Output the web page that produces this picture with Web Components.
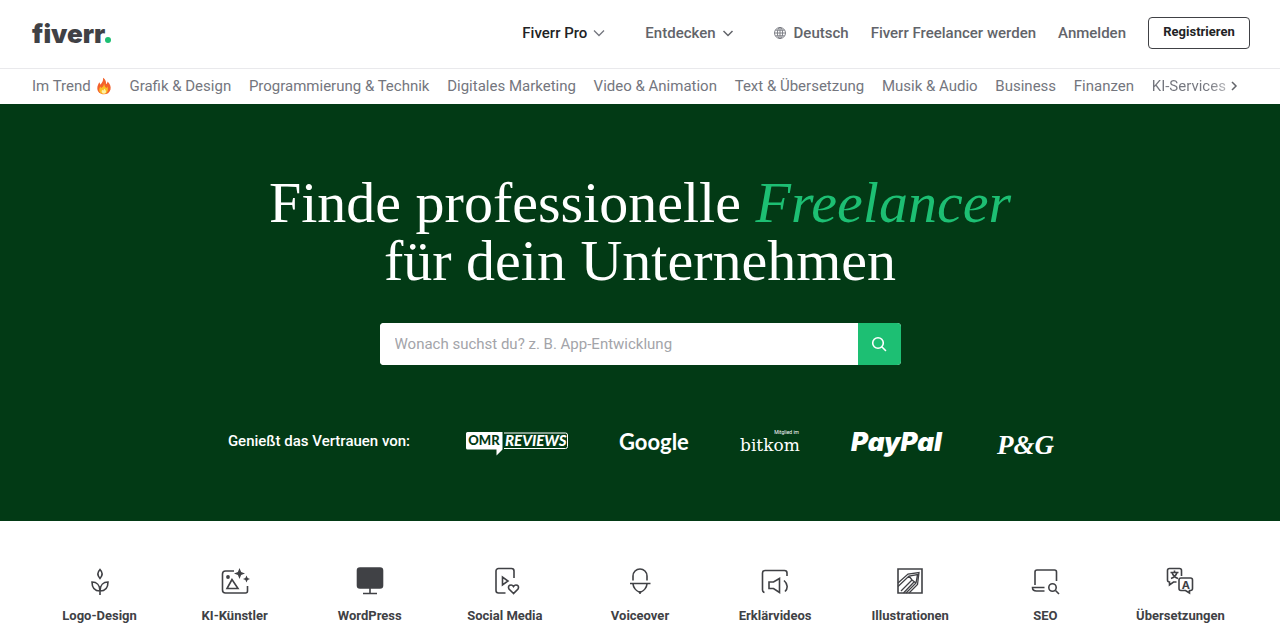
<!DOCTYPE html>
<html lang="de">
<head>
<meta charset="utf-8">
<meta name="viewport" content="width=device-width, initial-scale=1">
<title>Fiverr</title>
<style>
body { margin: 0; background: #fff; font-family: Roboto, "Liberation Sans", sans-serif; font-size: 15px; color: #62646a; }
</style>
</head>
<body>
<site-header></site-header>
<category-nav></category-nav>
<main>
  <hero-banner>
    <search-box></search-box>
    <trusted-by slot="trust"></trusted-by>
  </hero-banner>
  <service-grid>
    <service-tile icon="sprout">Logo-Design</service-tile>
    <service-tile icon="art">KI-Künstler</service-tile>
    <service-tile icon="monitor">WordPress</service-tile>
    <service-tile icon="social">Social Media</service-tile>
    <service-tile icon="voice">Voiceover</service-tile>
    <service-tile icon="video">Erklärvideos</service-tile>
    <service-tile icon="pencil">Illustrationen</service-tile>
    <service-tile icon="seo">SEO</service-tile>
    <service-tile icon="translate">Übersetzungen</service-tile>
  </service-grid>
</main>
<script>
const define = (name, html) => customElements.define(name, class extends HTMLElement {
  constructor() {
    super();
    this.attachShadow({ mode: 'open' }).innerHTML = html;
  }
});

define('site-header', `
<style>
:host { display: block; border-bottom: 1px solid #e9e9ec; }
header { display: flex; align-items: center; justify-content: space-between; padding: 0 30px 0 32px; height: 68px; box-sizing: border-box; }
a { color: inherit; text-decoration: none; }
.logo { display: flex; align-items: baseline; font: 900 26px/32px Inter, sans-serif; color: #404145; }
.logo span { width: 6px; height: 6px; border-radius: 50%; background: #1dbf73; }
nav { display: flex; align-items: center; gap: 22px; font-size: 15px; line-height: 24px; font-weight: 500; padding-bottom: 3px; }
.menu { display: flex; align-items: center; gap: 6px; border: 0; background: none; padding: 0; margin-right: 18px; font: inherit; color: inherit; }
.pro { color: #222325; }
.lang { display: flex; align-items: center; gap: 8px; }
svg { display: block; }
.join { font: 700 13px/16px Roboto, sans-serif; color: #222325; background: #fff; border: 1px solid #404145; border-radius: 4px; height: 32px; width: 102px; padding: 0 0 1px; }
</style>
<header>
  <a class="logo" href="#" aria-label="Fiverr">fiverr<span></span></a>
  <nav>
    <button class="menu pro">Fiverr Pro <svg width="12" height="8" viewBox="0 0 12 8" fill="none" stroke="#74767e" stroke-width="1.3"><path d="M1 1.5l5 5 5-5"/></svg></button>
    <button class="menu">Entdecken <svg width="12" height="8" viewBox="0 0 12 8" fill="none" stroke="#62646a" stroke-width="1.5"><path d="M1.500 2l4.500 4.500 4.500-4.500"/></svg></button>
    <a class="lang" href="#"><svg width="12" height="12" viewBox="0 0 12 12" fill="none" stroke="#74767e" stroke-width=".9"><circle cx="6" cy="6" r="5.5"/><ellipse cx="6" cy="6" rx="2.6" ry="5.5"/><path d="M6 .5v11M.5 6h11M1.4 3.2h9.2M1.4 8.8h9.2"/></svg>Deutsch</a>
    <a href="#">Fiverr Freelancer werden</a>
    <a href="#">Anmelden</a>
    <button class="join">Registrieren</button>
  </nav>
</header>`);

define('category-nav', `
<style>
:host { display: block; }
nav { display: flex; align-items: center; padding: 0 42px 2px 32px; height: 35px; box-sizing: border-box; gap: 4px; }
ul { flex: 1; display: flex; justify-content: space-between; list-style: none; margin: 0; padding: 0; line-height: 24px; font-size: 15px; color: #74767e; white-space: nowrap; }
a { color: inherit; text-decoration: none; }
.hot { display: flex; align-items: center; gap: 5px; }
.fade { background: linear-gradient(90deg, #74767e 75%, #b5b6ba); background-clip: text; -webkit-background-clip: text; color: transparent; }
button { border: 0; background: none; padding: 0; display: flex; }
</style>
<nav aria-label="Kategorien">
  <ul>
    <li><a class="hot" href="#">Im Trend <svg width="16" height="18" viewBox="0 0 16 18" aria-hidden="true"><path d="M7 .8c3 2 3.2 4.5 3 6.2 1-.5 1.5-1.500 1.500-2.600 2.500 2.200 3.700 5 3 8-.8 3.200-3.400 4.900-6.600 4.900-3.700 0-6.600-2.300-6.600-6C1.300 8.800 2.500 7 3.300 5.300c.6.7.9 1.500.8 2.400C6.300 6 7.500 3.500 7 .8z" fill="#f3612b"/><path d="M8 6.500c.8 2 .7 3.600 2.600 4.500.4-.4.700-1 .7-1.700 1.500 3.600.1 7.500-3.500 7.700-3.200 0-5-2.200-4.500-5 .2-1 .7-1.900 1.100-2.400.2.700.500 1.200 1 1.500C6.400 10 8 9.200 8 6.500z" fill="#fbbf24"/><path d="M8 11.500c1.700 1.300 2.300 2.600 1.900 3.900-.9 1.700-3.500 1.500-4.100-.1-.4-1.200.1-2 .700-2.500.2.500.5.700.8.800.5-.4.800-1.200.7-2.100z" fill="#fff1a8"/></svg></a></li>
    <li><a href="#">Grafik &amp; Design</a></li>
    <li><a href="#">Programmierung &amp; Technik</a></li>
    <li><a href="#">Digitales Marketing</a></li>
    <li><a href="#">Video &amp; Animation</a></li>
    <li><a href="#">Text &amp; Übersetzung</a></li>
    <li><a href="#">Musik &amp; Audio</a></li>
    <li><a href="#">Business</a></li>
    <li><a href="#">Finanzen</a></li>
    <li><a class="fade" href="#">KI-Services</a></li>
  </ul>
  <button aria-label="Weiter"><svg width="8" height="10" viewBox="0 0 8 10" fill="none" stroke="#62646a" stroke-width="1.5"><path d="M2 1l4 4-4 4"/></svg></button>
</nav>`);

define('hero-banner', `
<style>
:host { display: block; background: #023a15; color: #fff; padding: 70px 32px 62px; }
h1 { margin: 0 0 33px; text-align: center; font: 400 58px/58px "Liberation Serif", serif; }
em { color: #1dbf73; }
.search { display: flex; justify-content: center; }
.trust { margin-top: 60px; }
</style>
<h1>Finde professionelle <em>Freelancer</em><br>für dein Unternehmen</h1>
<div class="search"><slot></slot></div>
<div class="trust"><slot name="trust"></slot></div>`);

define('search-box', `
<style>
:host { display: block; flex: 0 1 521px; }
form { display: flex; height: 42px; border-radius: 4px; overflow: hidden; background: #fff; }
input { flex: 1; min-width: 0; border: 0; outline: 0; padding: 0 15px; font: 15px/24px Roboto, sans-serif; color: #404145; background: #fff; }
input::placeholder { color: #a3a4a9; opacity: 1; }
button { width: 43px; border: 0; padding: 0; background: #1dbf73; display: flex; align-items: center; justify-content: center; }
</style>
<form role="search">
  <input type="search" aria-label="Suche" placeholder="Wonach suchst du? z. B. App-Entwicklung">
  <button type="button" aria-label="Suchen"><svg width="16" height="16" viewBox="0 0 16 16" fill="none" stroke="#fff" stroke-width="1.6" stroke-linecap="round"><circle cx="7" cy="7" r="5.300"/><path d="M11 11l3.500 3.500"/></svg></button>
</form>`);

define('trusted-by', `
<style>
:host { display: flex; align-items: center; justify-content: center; gap: 52px; height: 34px; }
p { margin: 0 4px 0 0; font-size: 15px; line-height: 24px; font-weight: 500; white-space: nowrap; padding-bottom: 2px; }
svg { display: block; fill: #fff; overflow: visible; }
</style>
<p>Genießt das Vertrauen von:</p>
<svg width="102" height="26" viewBox="0 0 102 26" role="img" aria-label="OMR Reviews">
  <path d="M1.500 3h35v17.500L30.500 26.500V20.500H1.500A1.500 1.500 0 0 1 0 19V4.500A1.500 1.500 0 0 1 1.500 3z"/>
  <path d="M38 4h61.500a2 2 0 0 1 2 2v11.500a2 2 0 0 1-2 2H38" fill="none" stroke="#fff"/>
  <text x="18" y="16" text-anchor="middle" font-family="Lato" font-weight="900" font-size="13" fill="#023a15">OMR</text>
  <text x="39" y="17" font-family="Lato" font-weight="900" font-style="italic" font-size="15">REVIEWS</text>
</svg>
<svg width="68" height="26" viewBox="0 0 68 26" role="img" aria-label="Google"><text x="-1" y="21" font-family="Lato" font-weight="700" font-size="22">Google</text></svg>
<svg width="59" height="26" viewBox="0 0 59 26" role="img" aria-label="bitkom"><text x="59" y="5" text-anchor="end" font-family="Roboto" font-size="5">Mitglied im</text><text x="0" y="22" font-family="DejaVu Serif" font-size="17">bitkom</text></svg>
<svg width="94" height="26" viewBox="0 0 94 26" role="img" aria-label="PayPal"><text x="0" y="22" font-family="Inter" font-weight="900" font-style="italic" font-size="26">PayPal</text></svg>
<svg width="55" height="26" viewBox="0 0 55 26" role="img" aria-label="P&amp;G"><text x="0" y="25" font-family="Liberation Serif" font-weight="700" font-style="italic" font-size="27">P&amp;G</text></svg>`);

define('service-grid', `
<style>
:host { display: grid; grid-template-columns: repeat(9, 1fr); padding: 43px 32px 16px; }
</style>
<slot></slot>`);

const icons = {
  sprout: '<path d="M16 5.500c3 3 3 5.700 0 9-3-3.300-3-6 0-9zM16 31v-7M16 27c-5 0-8-2.500-8-9 4.500 0 8 3 8 9zM16 27c5 0 8-2.500 8-9-4.500 0-8 3-8 9z"/>',
  art: '<path d="M15 7H6.500a3 3 0 0 0-3 3v16a3 3 0 0 0 3 3h20a2 2 0 0 0 2-2v-5M13 15.500l-5 9h11z"/><g fill="#404145" stroke="none"><circle cx="9" cy="13" r="1.900"/><path d="M20.500 4l1.600 3.900 3.900 1.600-3.900 1.600-1.600 3.900-1.600-3.900L15 9.500l3.900-1.600zM27.500 11.500l1.100 2.400 2.400 1.100-2.400 1.100-1.100 2.400-1.100-2.400L24 15l2.400-1.100z"/></g>',
  monitor: '<rect x="3.500" y="4" width="25" height="20" rx="2.500" fill="#404145"/><path d="M16 24v5M9 29.500h14"/>',
  social: '<path d="M25 14V7a2.500 2.500 0 0 0-2.500-2.500h-13A2.500 2.500 0 0 0 7 7v19.500A2.500 2.500 0 0 0 9.500 29h7M13.500 13v8l5.500-4zM24.500 29.500l-4.500-4.500c-2-3.500 2.500-5.500 4.500-2.500 2-3 6.500-1 4.500 2.500z"/>',
  voice: '<path d="M9 16.500V12a7 7 0 0 1 14 0v4.500M6 19.500h20.500M9 20c.5 4.500 3.500 7 7 8.500 3.500-1.500 6.500-4 7-8.500M16 27v3"/>',
  video: '<path d="M5.500 28.500a2.500 2.500 0 0 1-2-2.500V9A2.500 2.500 0 0 1 6 6.500h19.500A2.500 2.500 0 0 1 28 9v3M10 18h4.500l6-3.500v14l-6-4H10zM25 16.500c4 3.500 4 8 1 11"/>',
  pencil: '<path d="M4 5h24v24H4z"/><path d="M4 22.500L15 12l8.500-1.500L22 19 12 29M7 27L18 16M15 12l3 4 4 3M9.500 29L20 18M4 19l10-9 11-1.500-1.500 12L15 29" stroke-width="1.300"/>',
  seo: '<path d="M6 21V8a2 2 0 0 1 2-2h17.500a2 2 0 0 1 2 2v9M15.500 23.500H3.500c0 2.500 1.500 3.500 4 3.500h8"/><circle cx="23.500" cy="23.500" r="3.700"/><path d="M26.500 26.500l3.500 3.500"/>',
  translate: '<path d="M17.500 12V6.500a2 2 0 0 0-2-2H5.500a2 2 0 0 0-2 2V16a2 2 0 0 0 2 2v3l4-3h3M17 14h9.500a2 2 0 0 1 2 2v8.500a2 2 0 0 1-2 2h-1v2.500l-4-2.500H17a2 2 0 0 1-2-2V16a2 2 0 0 1 2-2z"/><path d="M10.500 6.500v2M6.500 8.500h8M13 8.500c-1 3.500-3 5-6 6M8 8.500c1 3.500 3 5 6 6"/><text x="21.800" y="24.500" text-anchor="middle" font-family="Inter" font-weight="700" font-size="11" fill="#404145" stroke="none">A</text>'
};

customElements.define('service-tile', class extends HTMLElement {
  constructor() {
    super();
    this.attachShadow({ mode: 'open' }).innerHTML = `
<style>
:host { display: block; min-width: 0; }
a { display: flex; flex-direction: column; align-items: center; gap: 10px; color: #404145; text-decoration: none; font-size: 13px; line-height: 20px; font-weight: 700; white-space: nowrap; }
svg { display: block; }
</style>
<a href="#"><svg width="32" height="32" viewBox="0 0 32 32" fill="none" stroke="#404145" stroke-width="1.6" aria-hidden="true">${icons[this.getAttribute('icon')]}</svg><span><slot></slot></span></a>`;
  }
});
</script>
</body>
</html>
